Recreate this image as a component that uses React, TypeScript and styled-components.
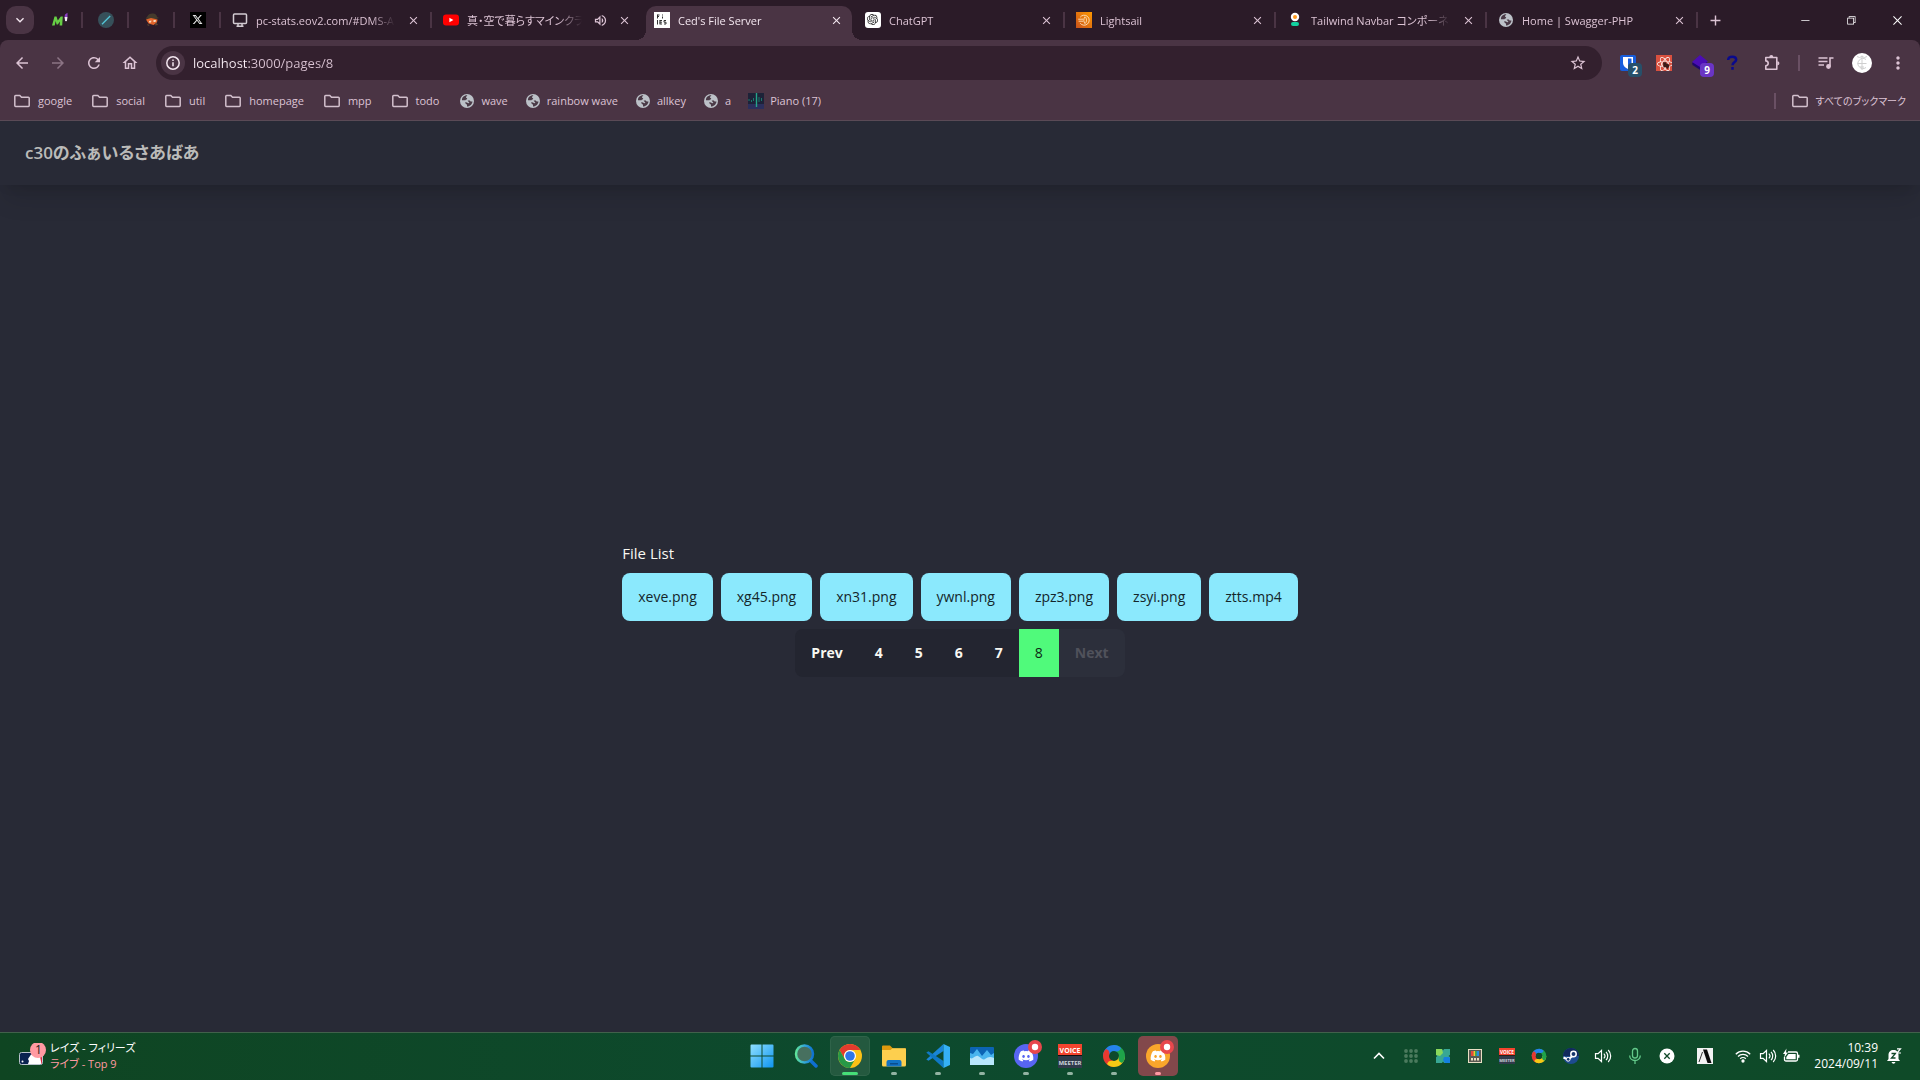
import React from 'react';
import styled, { createGlobalStyle, css } from 'styled-components';
import {
  MdArrowBack,
  MdArrowForward,
  MdRefresh,
  MdOutlineHome,
  MdStarBorder,
  MdMoreVert,
  MdClose,
  MdAdd,
  MdKeyboardArrowDown,
  MdOutlineVolumeUp,
} from 'react-icons/md';
import { FaXTwitter, FaDiscord, FaReact } from 'react-icons/fa6';
import { SiOpenai } from 'react-icons/si';
import { VscChromeRestore, VscChromeMinimize, VscChromeClose } from 'react-icons/vsc';

const color = {
  strip: '#2b1b28',
  chrome: '#4a3444',
  field: '#33202e',
  chromeText: '#dcc3d4',
  chromeLight: '#f3e6ef',
  page: '#282a36',
  pageText: '#f8f8f2',
  file: '#8be9fd',
  active: '#50fa7b',
};

const Global = createGlobalStyle`
  * { box-sizing: border-box; }
  body {
    margin: 0;
    background: ${color.page};
    font-family: "Open Sans", "Noto Sans CJK JP", sans-serif;
    font-feature-settings: "palt";
  }
  button, input { font: inherit; color: inherit; }
  button { padding: 0; border: 0; background: none; cursor: pointer; }
  a { color: inherit; text-decoration: none; }
  svg { display: block; flex: none; }
  h1 { margin: 0; }
`;

const Screen = styled.div`
  display: flex;
  flex-direction: column;
  min-height: 100vh;
`;

/* ---------- Tab strip ---------- */

const TabStrip = styled.header`
  display: flex;
  align-items: stretch;
  height: 40px;
  padding-left: 6px;
  background: ${color.strip};
  color: ${color.chromeText};
  font-size: 11px;
`;

const TabSearch = styled.button`
  display: grid;
  place-items: center;
  align-self: center;
  width: 28px;
  height: 28px;
  margin-right: 3px;
  border-radius: 10px;
  background: ${color.chrome};
  color: ${color.chromeLight};
`;

const separator = css`
  background: linear-gradient(${color.chrome}, ${color.chrome}) right center / 2px 16px no-repeat;
`;

const PinnedTab = styled.button`
  display: grid;
  place-items: center;
  width: 46px;
  ${separator}
`;

const TabItem = styled.div<{ $active?: boolean; $divided?: boolean }>`
  position: relative;
  display: flex;
  align-items: center;
  flex: 0 1 211px;
  min-width: 0;
  padding: 0 11px;
  ${(p) => p.$divided && separator}
  ${(p) =>
    p.$active &&
    css`
      flex-basis: 206px;
      height: 34px;
      margin: 6px 2px 0 3px;
      padding: 0 8px 6px;
      border-radius: 10px 10px 0 0;
      background: ${color.chrome};
      color: ${color.chromeLight};
      &::before,
      &::after {
        content: '';
        position: absolute;
        bottom: 0;
        width: 10px;
        height: 10px;
      }
      &::before {
        right: 100%;
        background: radial-gradient(circle at 0 0, transparent 10px, ${color.chrome} 10px);
      }
      &::after {
        left: 100%;
        background: radial-gradient(circle at 100% 0, transparent 10px, ${color.chrome} 10px);
      }
    `}
`;

const TabTitle = styled.a`
  flex: 1;
  min-width: 0;
  margin: 0 2px 0 8px;
  padding-top: 2px;
  overflow: hidden;
  line-height: 18px;
  white-space: nowrap;
  mask-image: linear-gradient(to left, transparent, #000 24px);
`;

const TabButton = styled.button`
  display: grid;
  place-items: center;
  width: 16px;
  height: 16px;
  margin-left: 8px;
`;

const NewTab = styled.button`
  display: grid;
  place-items: center;
  width: 34px;
`;

const WindowControls = styled.div`
  display: flex;
  margin-left: auto;
  color: #fff;
`;

const WindowButton = styled.button`
  display: grid;
  place-items: center;
  width: 46px;
`;

/* ---------- Toolbar ---------- */

const ToolbarBack = styled.div`
  background: ${color.strip};
`;

const Toolbar = styled.div`
  display: flex;
  align-items: center;
  height: 46px;
  padding: 0 4px;
  border-radius: 8px 8px 0 0;
  background: ${color.chrome};
  color: ${color.chromeText};
`;

const ToolButton = styled.button<{ $dim?: boolean }>`
  display: grid;
  place-items: center;
  width: 36px;
  height: 34px;
  opacity: ${(p) => (p.$dim ? 0.45 : 1)};
`;

const AddressBar = styled.form`
  display: flex;
  align-items: center;
  flex: 1;
  height: 34px;
  margin: 0 8px;
  padding: 0 6px 0 5px;
  border-radius: 17px;
  background: ${color.field};
`;

const SiteInfo = styled.button`
  display: grid;
  place-items: center;
  width: 24px;
  height: 24px;
  border-radius: 50%;
  background: ${color.chrome};
`;

const AddressInput = styled.input`
  flex: 1;
  min-width: 0;
  margin-left: 8px;
  padding: 0;
  border: 0;
  outline: 0;
  background: linear-gradient(90deg, #fbeff7 56px, #d9c2d2 56px);
  background-clip: text;
  color: transparent;
  caret-color: ${color.chromeLight};
  font-size: 13px;
  line-height: 20px;
`;

const Extension = styled.button`
  position: relative;
  display: grid;
  place-items: center;
  width: 36px;
  height: 34px;
`;

const ExtensionBadge = styled.span<{ $tone: string }>`
  position: absolute;
  right: 4px;
  bottom: 3px;
  width: 14px;
  height: 14px;
  border-radius: 4px;
  background: ${(p) => p.$tone};
  color: #fff;
  font-size: 10px;
  font-weight: 700;
  line-height: 14px;
  text-align: center;
`;

const ToolDivider = styled.span`
  width: 2px;
  height: 16px;
  margin: 0 8px;
  background: #6a5064;
`;

/* ---------- Bookmarks ---------- */

const Bookmarks = styled.nav`
  display: flex;
  align-items: center;
  height: 35px;
  padding: 0 14px 4px;
  border-bottom: 1px solid #5a4a56;
  background: ${color.chrome};
  color: ${color.chromeText};
  font-size: 11px;
`;

const Bookmark = styled.a<{ $site?: boolean }>`
  display: flex;
  align-items: center;
  gap: ${(p) => (p.$site ? 6 : 8)}px;
  margin-right: ${(p) => (p.$site ? 17 : 20)}px;
  line-height: 16px;
`;

const AllBookmarks = styled.a`
  display: flex;
  align-items: center;
  gap: 8px;
  margin-left: auto;
  padding-left: 16px;
  border-left: 2px solid #6a5064;
  font-size: 10px;
  line-height: 16px;
`;

/* ---------- Page ---------- */

const Navbar = styled.div`
  position: relative;
  display: flex;
  align-items: center;
  height: 64px;
  padding: 0 25px;
  background: ${color.page};
  box-shadow: 0 20px 25px -5px rgba(0, 0, 0, 0.1), 0 8px 10px -6px rgba(0, 0, 0, 0.1);
`;

const Brand = styled.a`
  color: #bbbbb9;
  font-size: 17px;
  font-weight: 600;
  line-height: 28px;
`;

const Main = styled.main`
  display: flex;
  flex: 1;
  flex-direction: column;
  align-items: center;
  justify-content: center;
  color: ${color.pageText};
`;

const FileSection = styled.section`
  display: flex;
  flex-direction: column;
  gap: 8px;
`;

const FileHeading = styled.h1`
  font-size: 15px;
  font-weight: 500;
  line-height: 24px;
`;

const FileRow = styled.div`
  display: flex;
  gap: 8px;
`;

const FileLink = styled.a`
  display: flex;
  align-items: center;
  height: 48px;
  padding: 0 16px;
  border-radius: 8px;
  background: ${color.file};
  color: #14262a;
  font-size: 14px;
  font-weight: 500;
`;

const Pagination = styled.nav`
  display: flex;
  align-self: center;
  overflow: hidden;
  border-radius: 8px;
`;

const PageButton = styled.button<{ $current?: boolean }>`
  height: 48px;
  padding: 0 16px;
  background: ${(p) => (p.$current ? color.active : '#232530')};
  color: ${(p) => (p.$current ? '#0d2914' : color.pageText)};
  font-size: 14px;
  font-weight: ${(p) => (p.$current ? 400 : 700)};
  &:disabled {
    background: #2c2f3b;
    color: #50525b;
    cursor: default;
  }
`;

/* ---------- Taskbar ---------- */

const Taskbar = styled.footer`
  display: grid;
  grid-template-columns: 1fr auto 1fr;
  align-items: center;
  height: 48px;
  box-shadow: inset 0 1px #41614b;
  background: linear-gradient(90deg, #0f4522, #0d4a2e 45%, #0f4a28);
  color: #fff;
`;

const Widget = styled.button`
  display: flex;
  align-items: center;
  justify-self: start;
  gap: 4px;
  margin-left: 18px;
  text-align: left;
`;

const WidgetText = styled.span`
  display: flex;
  flex-direction: column;
  font-size: 11px;
  line-height: 16px;
`;

const WidgetLive = styled.span`
  color: #ff9aa2;
`;

const TaskIcons = styled.div`
  display: flex;
  gap: 4px;
`;

const TaskButton = styled.button<{ $state?: 'open' | 'focused' | 'alert' }>`
  position: relative;
  display: grid;
  place-items: center;
  width: 40px;
  height: 40px;
  border-radius: 5px;
  ${(p) => p.$state === 'focused' && 'background: #24593f; box-shadow: inset 0 0 0 1px #2f6349;'}
  ${(p) => p.$state === 'alert' && 'background: #82484b;'}
  &::after {
    content: '';
    display: ${(p) => (p.$state ? 'block' : 'none')};
    position: absolute;
    bottom: 1px;
    left: 50%;
    width: ${(p) => (p.$state === 'focused' ? 16 : 6)}px;
    height: 3px;
    border-radius: 2px;
    background: ${(p) =>
      p.$state === 'focused' ? '#46e078' : p.$state === 'alert' ? '#ff9aa2' : '#93b3a2'};
    transform: translateX(-50%);
  }
`;

const Tray = styled.div`
  display: flex;
  align-items: center;
  justify-self: end;
  padding-right: 18px;
`;

const TrayButton = styled.button<{ $w?: number }>`
  display: grid;
  place-items: center;
  width: ${(p) => p.$w ?? 32}px;
  height: 40px;
`;

const Clock = styled.button`
  display: flex;
  flex-direction: column;
  align-items: flex-end;
  margin: 0 8px 0 7px;
  font-size: 12px;
  line-height: 16px;
`;

/* ---------- Drawings ---------- */

const Folder = () => (
  <svg width="16" height="16" viewBox="0 0 16 16" fill="none" stroke="#d3c0cd" strokeWidth="1.5">
    <path d="M.8 3.2c0-.5.3-.8.8-.8h4.2l1.7 1.8h6.9c.5 0 .8.3.8.8v7.6c0 .5-.3.8-.8.8H1.6c-.5 0-.8-.3-.8-.8z" />
  </svg>
);

const Globe = () => (
  <svg width="16" height="16" viewBox="0 0 16 16">
    <circle cx="8" cy="8" r="7" fill="#bcc1c8" />
    <path
      d="M8.4 2.2c-.2 1-1.400 1-1.400 2s1.200.6 1.200 1.500-1.700.6-1.700 1.600H3c-.4-2.600 1.900-5.200 5.400-5.100zM8.600 7.400h2.300l.7 1h1.900c-.3 2.500-2.300 5-5.500 5.100v-1.700L6.300 10.200V9H3.200c1.600-.2 2.800-.1 4 .2.700.2 1.600 1 2.500 1 .8 0 .8-.8.2-1z"
      fill="#4a3a47"
    />
  </svg>
);

const Monitor = () => (
  <svg width="16" height="16" viewBox="0 0 16 16" fill="none" stroke="#d3ccd2" strokeWidth="1.5">
    <rect x="1.500" y="2" width="13" height="9.500" rx="1" />
    <path d="M6 11.500v2.500M10 11.500v2.500M4.500 14.200h7" />
  </svg>
);

const YouTube = () => (
  <svg width="16" height="16" viewBox="0 0 16 16">
    <rect y="2.500" width="16" height="11" rx="3" fill="#f00" />
    <path d="M6.400 5.700v4.600L10.400 8z" fill="#fff" />
  </svg>
);

const MonkeyM = () => (
  <svg width="18" height="16" viewBox="0 0 18 16">
    <path d="M1 13.500 3.500 4.500h2l1.300 4 3-4h2l-.6 9H8.600l.4-4-2.200 3H5.600L4.700 9l-1 4.500z" fill="#67cf45" />
    <path d="M13.500 5h3l-.5 3.500-1 1-1-1z" fill="#f2e9f5" />
    <path d="M14 2.500 16.500.8V5h-3z" fill="#8a3fc4" />
  </svg>
);

const Slash = () => (
  <svg width="16" height="16" viewBox="0 0 16 16">
    <circle cx="8" cy="8" r="8" fill="#36505a" />
    <path d="M4 12.200 12.200 4" stroke="#54c7d8" strokeWidth="1.300" />
  </svg>
);

const Pilot = () => (
  <svg width="16" height="16" viewBox="0 0 16 16">
    <path d="M3 5c1-3 4-4 6.500-3.500 2.500.5 3.500 2 3.500 3.500l2 1-3 1H4L1.500 6.500z" fill="#443a2c" />
    <path d="M2 7.500 7 6l6.500 1.500-.5 3-3.500 2.500-5-1.500z" fill="#e2652c" />
    <path d="M5 9l2.500-.5L7 10.500H5zM9.500 8H12l-.5 2H9.500z" fill="#f7d9bd" />
    <path d="M12 10l2 3-3 .5zM3 12l3 1-2 1z" fill="#5b4633" />
  </svg>
);

const XLogo = () => (
  <svg width="16" height="16" viewBox="0 0 16 16">
    <rect width="16" height="16" fill="#000" />
    <FaXTwitter x="2" y="2" width="12" height="12" color="#e8e8e8" />
  </svg>
);

const FilesFavicon = () => (
  <svg width="16" height="16" viewBox="0 0 16 16">
    <rect width="16" height="16" fill="#fff" />
    <path
      d="M3.500 2.500v4M3.500 3h2M3.500 4.500h1.500M8.500 2.500v1M8.500 4.500v2M3.500 8v4.500M5.500 8.500H8M5.500 10.200H8M5.500 12H8M6 8.500V12M12 8.500h-2v1.700h2V12h-2"
      fill="none"
      stroke="#333"
      strokeWidth="1"
    />
  </svg>
);

const ChatFavicon = () => (
  <svg width="16" height="16" viewBox="0 0 16 16">
    <rect width="16" height="16" rx="3" fill="#fff" />
    <SiOpenai x="2" y="2" width="12" height="12" color="#222" />
  </svg>
);

const Lightsail = () => (
  <svg width="16" height="16" viewBox="0 0 16 16" fill="none">
    <defs>
      <linearGradient id="sail" x1="0" y1="1" x2="1" y2="0">
        <stop stopColor="#c8511b" />
        <stop offset="1" stopColor="#f90" />
      </linearGradient>
    </defs>
    <rect width="16" height="16" fill="url(#sail)" />
    <path d="M4.200 5.200a5 5 0 1 1 0 6M2.200 7.200h5M2.600 9.200h4.600M9 4.800c2 1.500 2 5.200 0 6.800-1.600-2-1.600-4.600 0-6.800z" stroke="#ffe3c2" strokeWidth=".9" />
  </svg>
);

const Bulb = () => (
  <svg width="16" height="16" viewBox="0 0 16 16">
    <circle cx="8" cy="5" r="4.200" fill="#fff" />
    <circle cx="8" cy="5" r="2" fill="#ff9b1f" />
    <rect x="4" y="10" width="8" height="4" rx="2" fill="#12d2a0" />
  </svg>
);

const Piano = () => (
  <svg width="16" height="16" viewBox="0 0 16 16">
    <rect width="16" height="16" fill="#1d2238" />
    <path d="M0 11h16v5H0z" fill="#2b2f5c" />
    <path d="M8.500 0v14" stroke="#25a58a" strokeWidth="1.400" />
    <path d="M11 4v5M5.500 5v3M1 6v2M3.500 7v2M13.500 5v3" stroke="#197a6c" />
  </svg>
);

const InfoIcon = () => (
  <svg width="16" height="16" viewBox="0 0 16 16" fill="none" stroke="#f3e6ef" strokeWidth="1.500">
    <circle cx="8" cy="8" r="6.200" />
    <path d="M8 7.200v4M8 4.500v1.500" />
  </svg>
);

const Shield = () => (
  <svg width="16" height="16" viewBox="0 0 16 16">
    <rect width="16" height="16" rx="2" fill="#175ddc" />
    <path d="M3 2h10v6c0 3-2.500 4.800-5 6-2.500-1.200-5-3-5-6z" fill="#fff" />
    <path d="M8 3.500h3.500V8c0 2-1.600 3.300-3.500 4.200z" fill="#175ddc" />
  </svg>
);

const ReactTool = () => (
  <svg width="16" height="16" viewBox="0 0 16 16">
    <rect width="16" height="16" fill="#d9503f" />
    <FaReact x="1" y="1" width="14" height="14" color="#fff" />
    <path d="M7 7.500l2.500-.5 1 1.500 2 .5 1 2-2 3-2-2-2 .5z" fill="#3c1a16" />
  </svg>
);

const Layers = () => (
  <svg width="18" height="18" viewBox="0 0 18 18">
    <path d="M1 8.500 1.500 11 10 16.500l6-4V8z" fill="#1f0670" />
    <path d="M9 1l8 6.500L9 13 1 8z" fill="#4b0db5" />
  </svg>
);

const Question = () => (
  <svg width="18" height="16" viewBox="0 0 18 16" fill="none" stroke="#0a0a8c" strokeWidth="2.500">
    <path d="M1.200 5C1.200 2.800 2.800 1.700 5.200 1.700S9.200 2.900 9.200 4.700C9.200 7 5.500 7 5.500 10.200M5.500 12v2.800" />
  </svg>
);

const Puzzle = () => (
  <svg width="18" height="18" viewBox="0 0 18 18">
    <path
      d="M2.800 3.500h11v11.700h-11v-3.400c3.200-.2 3.200-4.700 0-4.900z"
      fill="none"
      stroke="#dcc3d4"
      strokeWidth="1.600"
      strokeLinejoin="round"
    />
    <path d="M6.300 3a2 2 0 0 1 4 0zM14.300 7.200a2 2 0 0 1 0 4.200z" fill="#dcc3d4" />
  </svg>
);

const Playlist = () => (
  <svg width="18" height="18" viewBox="0 0 18 18" fill="none" stroke="#dcc3d4" strokeWidth="1.600">
    <path d="M1.500 4h9M1.500 7.500h9M1.500 11h5.500M13 12.500V4h3.500" />
    <circle cx="11.500" cy="12.500" r="1.600" fill="#dcc3d4" />
  </svg>
);

const Avatar = () => (
  <svg width="20" height="20" viewBox="0 0 20 20" fill="none" stroke="#cfcfcf">
    <circle cx="10" cy="10" r="10" fill="#fff" stroke="none" />
    <path d="M14 6.500A5 5 0 1 0 14 14.500M10 2.500v14.500M5.500 10.500h9M5 3.500q2.500 2 5 0q2.500 2 5 0M8 14h4" />
  </svg>
);

const LeagueBadge = () => (
  <svg width="28" height="26" viewBox="0 0 28 26">
    <rect x="1.500" y="9.500" width="23" height="12" rx="2" fill="#0a2350" stroke="#b9c3cc" />
    <path d="M17 10h7v11h-9z" fill="#d7263d" />
    <path d="M13 11.500l5-1 4 3 1.500 7.500H10l1-3-1-2z" fill="#fff" />
    <circle cx="4.500" cy="18.500" r="1" fill="#fff" />
    <circle cx="20" cy="8" r="8" fill="#ff9aa2" transform="translate(0 -1)" />
    <text x="20.500" y="11" fontSize="12" textAnchor="middle" fill="#1a1a1a">1</text>
  </svg>
);

const Windows = () => (
  <svg width="24" height="24" viewBox="0 0 24 24">
    <defs>
      <linearGradient id="win" x1="0" y1="0" x2="1" y2="1">
        <stop stopColor="#8fe0ff" />
        <stop offset="1" stopColor="#0f95f0" />
      </linearGradient>
    </defs>
    <path d="M1.500.5h10v11h-11v-10q0-1 1-1zM12.500.5h10q1 0 1 1v10h-11zM.5 12.500h11v11h-10q-1 0-1-1zM12.500 12.500h11v10q0 1-1 1h-10z" fill="url(#win)" />
  </svg>
);

const SearchGlass = () => (
  <svg width="24" height="24" viewBox="0 0 24 24" fill="none">
    <defs>
      <linearGradient id="lens">
        <stop stopColor="#5fe39a" />
        <stop offset=".5" stopColor="#33a8d8" />
        <stop offset="1" stopColor="#0d72d4" />
      </linearGradient>
    </defs>
    <path d="M16.500 16.500 22 22" stroke="#0f6fd0" strokeWidth="3.500" strokeLinecap="round" />
    <circle cx="10.500" cy="10" r="8.500" fill="#47705f" stroke="url(#lens)" strokeWidth="2.500" />
  </svg>
);

const Chrome = () => (
  <svg width="24" height="24" viewBox="0 0 24 24">
    <circle cx="12" cy="12" r="12" fill="#fbc116" />
    <path d="M1.610 6A12 12 0 0 1 22.390 6H12a6 6 0 0 0-5.200 9z" fill="#e33b2e" />
    <path d="M1.610 6A12 12 0 0 0 12 24l5.200-9a6 6 0 0 1-10.400 0z" fill="#279847" />
    <circle cx="12" cy="12" r="6" fill="#fff" />
    <circle cx="12" cy="12" r="4.800" fill="#2f76e8" />
  </svg>
);

const Explorer = () => (
  <svg width="24" height="24" viewBox="0 0 24 24">
    <path d="M0 2.500q0-1 1-1h7l3 3H24V12H0z" fill="#dc9a0e" />
    <path d="M0 6h8.500l2-1.800H23q1 0 1 1V21q0 1.500-1.500 1.500h-21Q0 22.500 0 21z" fill="#fdcf4e" />
    <path d="M4.500 22.500V18q0-2 2-2h11q2 0 2 2v4.500z" fill="#1273c4" />
    <path d="M8 19h8v1.500H8z" fill="#0a4d8d" />
  </svg>
);

const Code = () => (
  <svg width="24" height="24" viewBox="0 0 24 24">
    <path d="M.3 15.500 17.500 0v7L2.500 16.700z" fill="#1a86d6" />
    <path d="M.3 8.500 2.500 7.300 17.500 17v7z" fill="#0f78c4" />
    <path d="M17.500 0 24 3v18l-6.500 3z" fill="#35b1f5" />
  </svg>
);

const Waves = () => (
  <svg width="24" height="20" viewBox="0 0 24 20">
    <rect y="1" width="24" height="18" rx="1" fill="#0c64b4" />
    <path d="M0 7l3 1 4-5 5 7 5-6 4 5 3-2v11H0z" fill="#49b4ee" />
    <path d="M0 12c3 2 5-3 8-2s4 5 7 3 5-3 9-1v7H0z" fill="#b9e7fc" />
  </svg>
);

const DiscordApp = ({ fill }: { fill: string }) => (
  <svg width="32" height="32" viewBox="0 0 32 32">
    <circle cx="16" cy="16" r="12" fill={fill} />
    <FaDiscord x="8" y="8" width="16" height="16" color="#fff" />
    <circle cx="25" cy="7" r="7" fill="#e8474c" />
    <circle cx="25" cy="7" r="3.200" fill="#fff" />
  </svg>
);

const VoiceMeeter = ({ size }: { size: number }) => (
  <svg width={size} height={size} viewBox="0 0 24 24">
    <rect width="24" height="11" fill="#f4442e" />
    <rect y="11" width="24" height="1" fill="#111" />
    <rect y="12" width="24" height="12" fill="#303a4a" />
    <text x="12" y="8.500" fontSize="7" fontWeight="700" textAnchor="middle" fill="#fff">VOICE</text>
    <text x="12" y="20.500" fontSize="6" fontWeight="700" textAnchor="middle" fill="#ccd2da">MEETER</text>
  </svg>
);

const Swirl = ({ size }: { size: number }) => (
  <svg width={size} height={size} viewBox="0 0 24 24" fill="none" strokeWidth="6">
    <path d="M12 4a8 8 0 0 1 8 8" stroke="#1fa34a" />
    <path d="M20 12a8 8 0 0 1-8 8" stroke="#f6c915" />
    <path d="M12 20a8 8 0 0 1-8-8" stroke="#e8392f" />
    <path d="M4 12a8 8 0 0 1 8-8" stroke="#2583ec" />
    <path d="M1 12c0-3 1-5 3-7 3 1 4 3 3 7z" fill="#e8392f" />
    <path d="M12 1c3 0 5 1 7 3-1 3-3 4-7 3z" fill="#2583ec" />
    <path d="M23 12c0 3-1 5-3 7-3-1-4-3-3-7z" fill="#1fa34a" />
    <path d="M12 23c-3 0-5-1-7-3 1-3 3-4 7-3z" fill="#f6c915" />
  </svg>
);

const Chevron = () => (
  <svg width="12" height="12" viewBox="0 0 12 12" fill="none" stroke="#fff" strokeWidth="1.600">
    <path d="M1 8.500l5-5 5 5" />
  </svg>
);

const DotGrid = () => (
  <svg width="14" height="14" viewBox="0 0 14 14" fill="#4b7a5d">
    {[2, 7, 12].map((y) => [2, 7, 12].map((x) => <circle key={`${x}-${y}`} cx={x} cy={y} r="1.900" />))}
  </svg>
);

const Pinwheel = () => (
  <svg width="16" height="16" viewBox="0 0 16 16">
    <path d="M1 1h6l1 1.500L9 1h6v6l-1.500 1L15 9v6H9l-1-1.500L7 15H1V9l1.500-1L1 7z" fill="#38a794" />
    <path d="M1 1h6l1 4-3 3-4-1z" fill="#8bd95b" />
    <path d="M9 9h5l1 1v5h-5l-2-3z" fill="#1580e0" />
  </svg>
);

const PowerToys = () => (
  <svg width="14" height="14" viewBox="0 0 14 14">
    <rect x=".5" y=".5" width="13" height="13" fill="#5a5a52" stroke="#e9dfc4" />
    <path d="M3 2h2.500v5H3z" fill="#e8453c" />
    <path d="M5.500 2h1.500v5H5.500z" fill="#f6c42f" />
    <path d="M7 2h1.700v5H7z" fill="#3fae49" />
    <path d="M8.700 2H11v5H8.700z" fill="#2a8de0" />
    <path d="M3 9h2v2.500H3zM6 9h2v2.500H6zM9 9h2v2.500H9z" fill="#e9dfc4" />
  </svg>
);

const SteamApp = () => (
  <svg width="16" height="16" viewBox="0 0 16 16" fill="none">
    <circle cx="8" cy="8" r="8" fill="#1d4b8f" />
    <path d="M0 8a8 8 0 0 1 16 0z" fill="#122a5c" />
    <path d="M.5 9.500 5 11.500 9.500 8" stroke="#fff" strokeWidth="2.200" />
    <circle cx="5.200" cy="11.300" r="1.900" fill="#15356b" stroke="#fff" strokeWidth="1" />
    <circle cx="10.500" cy="6" r="2.700" fill="#15356b" stroke="#fff" strokeWidth="1.500" />
  </svg>
);

const Speaker = () => (
  <svg width="18" height="16" viewBox="0 0 18 16" fill="none" stroke="#fff" strokeWidth="1.200">
    <path d="M1.500 5.700h2.600L7.500 2.500v11L4.100 10.300H1.500z" />
    <path d="M9.800 5.600a3.400 3.400 0 0 1 0 4.800M12 3.800a6 6 0 0 1 0 8.400M14.200 2a8.500 8.500 0 0 1 0 12" />
  </svg>
);

const Mic = () => (
  <svg width="14" height="18" viewBox="0 0 14 18" fill="none" stroke="#63c98a" strokeWidth="1.300">
    <rect x="4.500" y="1.500" width="5" height="9.500" rx="2.500" />
    <path d="M1.700 8.500c0 3 2.300 5 5.300 5s5.300-2 5.300-5M7 13.500V17" />
  </svg>
);

const CrossDisc = () => (
  <svg width="16" height="16" viewBox="0 0 16 16">
    <circle cx="8" cy="8" r="7.500" fill="#fff" />
    <path d="M5.300 5.300l5.400 5.400M10.700 5.300l-5.400 5.400" stroke="#0f4727" strokeWidth="1.300" />
  </svg>
);

const ImeMark = () => (
  <svg width="16" height="16" viewBox="0 0 16 16">
    <rect width="16" height="16" fill="#f3f3f3" />
    <path d="M6 1.500h4L14.500 15h-4z" fill="#0a0a0a" />
    <path d="M5.500 4 2 14" stroke="#333" />
  </svg>
);

const Wifi = () => (
  <svg width="16" height="14" viewBox="0 0 16 14" fill="none" stroke="#fff" strokeWidth="1.300">
    <path d="M.8 5.200a10.200 10.200 0 0 1 14.400 0M3 7.500a7 7 0 0 1 10 0M5.200 9.700a4 4 0 0 1 5.600 0" />
    <circle cx="8" cy="12" r="1" fill="#fff" />
  </svg>
);

const Battery = () => (
  <svg width="18" height="16" viewBox="0 0 18 16">
    <path d="M6 4h8q1.500 0 1.500 1.500v6Q15.500 13 14 13H4q-1.500 0-1.500-1.500V9" fill="none" stroke="#fff" strokeWidth="1.300" />
    <path d="M6.500 6h7.200v5.200H4.300V9z" fill="#fff" />
    <path d="M16 6.800h1.500v3H16zM4.500.5 1 6h2L2 10l4-5.500H4z" fill="#fff" />
  </svg>
);

const Bell = () => (
  <svg width="16" height="16" viewBox="0 0 16 16">
    <path d="M2.500 11V7C2.500 4 4.500 2 7.500 2s5 2 5 5v4l1.500 2H1zM5.500 14h4q-.5 1.800-2 1.800T5.500 14z" fill="#fff" />
    <path d="M5.500 5.500h4L5.500 10h4" fill="none" stroke="#0f4727" strokeWidth="1.300" />
    <path d="M11 .8h3.500L11 5h4" fill="none" stroke="#fff" strokeWidth="1.200" />
  </svg>
);

/* ---------- Content ---------- */

const pinned = [
  { name: 'M', icon: <MonkeyM /> },
  { name: 'Slash', icon: <Slash /> },
  { name: 'Pilot', icon: <Pilot /> },
  { name: 'X', icon: <XLogo /> },
];

const tabs = [
  { title: 'pc-stats.eov2.com/#DMS-A', icon: <Monitor />, divided: true },
  { title: '真・空で暮らすマインクラフ', icon: <YouTube />, audio: true },
  { title: "Ced's File Server", icon: <FilesFavicon />, active: true },
  { title: 'ChatGPT', icon: <ChatFavicon />, divided: true },
  { title: 'Lightsail', icon: <Lightsail />, divided: true },
  { title: 'Tailwind Navbar コンポーネン', icon: <Bulb />, divided: true },
  { title: 'Home | Swagger-PHP', icon: <Globe />, divided: true },
];

const folders = ['google', 'social', 'util', 'homepage', 'mpp', 'todo'];
const sites = ['wave', 'rainbow wave', 'allkey', 'a'];
const files = ['xeve.png', 'xg45.png', 'xn31.png', 'ywnl.png', 'zpz3.png', 'zsyi.png', 'ztts.mp4'];
const pages = [4, 5, 6, 7, 8];

type TaskApp = { name: string; icon: React.ReactNode; state?: 'open' | 'focused' | 'alert' };
const apps: TaskApp[] = [
  { name: 'Start', icon: <Windows /> },
  { name: 'Search', icon: <SearchGlass /> },
  { name: 'Chrome', icon: <Chrome />, state: 'focused' },
  { name: 'Explorer', icon: <Explorer />, state: 'open' },
  { name: 'Code', icon: <Code />, state: 'open' },
  { name: 'Monitor', icon: <Waves />, state: 'open' },
  { name: 'Discord', icon: <DiscordApp fill="#5865f2" />, state: 'open' },
  { name: 'Voicemeeter', icon: <VoiceMeeter size={24} />, state: 'open' },
  { name: 'Swirl', icon: <Swirl size={24} />, state: 'open' },
  { name: 'Discord Canary', icon: <DiscordApp fill="#f9a62b" />, state: 'alert' },
];

const tray = [
  { name: 'Show hidden icons', icon: <Chevron /> },
  { name: 'Grid', icon: <DotGrid /> },
  { name: 'Pinwheel', icon: <Pinwheel /> },
  { name: 'PowerToys', icon: <PowerToys /> },
  { name: 'Voicemeeter', icon: <VoiceMeeter size={16} /> },
  { name: 'Swirl', icon: <Swirl size={16} /> },
  { name: 'Steam', icon: <SteamApp /> },
  { name: 'Audio', icon: <Speaker /> },
  { name: 'Microphone', icon: <Mic /> },
  { name: 'Dismiss', icon: <CrossDisc /> },
];

export default function App() {
  return (
    <Screen>
      <Global />
      <TabStrip>
        <TabSearch aria-label="Search tabs">
          <MdKeyboardArrowDown size={16} />
        </TabSearch>
        {pinned.map((tab) => (
          <PinnedTab key={tab.name} aria-label={tab.name}>
            {tab.icon}
          </PinnedTab>
        ))}
        {tabs.map((tab) => (
          <TabItem key={tab.title} $active={tab.active} $divided={tab.divided}>
            {tab.icon}
            <TabTitle href="#">{tab.title}</TabTitle>
            {tab.audio && (
              <TabButton aria-label="Mute tab">
                <MdOutlineVolumeUp size={15} />
              </TabButton>
            )}
            <TabButton aria-label="Close tab">
              <MdClose size={13} />
            </TabButton>
          </TabItem>
        ))}
        <NewTab aria-label="New tab">
          <MdAdd size={17} />
        </NewTab>
        <WindowControls>
          <WindowButton aria-label="Minimize">
            <VscChromeMinimize size={12} />
          </WindowButton>
          <WindowButton aria-label="Restore">
            <VscChromeRestore size={12} />
          </WindowButton>
          <WindowButton aria-label="Close">
            <VscChromeClose size={13} />
          </WindowButton>
        </WindowControls>
      </TabStrip>

      <ToolbarBack>
        <Toolbar>
          <ToolButton aria-label="Back">
            <MdArrowBack size={18} />
          </ToolButton>
          <ToolButton aria-label="Forward" $dim>
            <MdArrowForward size={18} />
          </ToolButton>
          <ToolButton aria-label="Reload">
            <MdRefresh size={18} />
          </ToolButton>
          <ToolButton aria-label="Home">
            <MdOutlineHome size={18} />
          </ToolButton>
          <AddressBar>
            <SiteInfo type="button" aria-label="Site information">
              <InfoIcon />
            </SiteInfo>
            <AddressInput aria-label="Address" defaultValue="localhost:3000/pages/8" />
            <ToolButton type="button" aria-label="Bookmark this page">
              <MdStarBorder size={18} />
            </ToolButton>
          </AddressBar>
          <Extension aria-label="Passwords">
            <Shield />
            <ExtensionBadge $tone="#27506a">2</ExtensionBadge>
          </Extension>
          <Extension aria-label="React tools">
            <ReactTool />
          </Extension>
          <Extension aria-label="Layers">
            <Layers />
            <ExtensionBadge $tone="#6a35c4">9</ExtensionBadge>
          </Extension>
          <Extension aria-label="Help">
            <Question />
          </Extension>
          <Extension aria-label="Extensions">
            <Puzzle />
          </Extension>
          <ToolDivider />
          <ToolButton aria-label="Media">
            <Playlist />
          </ToolButton>
          <ToolButton aria-label="Profile">
            <Avatar />
          </ToolButton>
          <ToolButton aria-label="Menu">
            <MdMoreVert size={20} />
          </ToolButton>
        </Toolbar>
      </ToolbarBack>

      <Bookmarks>
        {folders.map((name) => (
          <Bookmark key={name} href="#">
            <Folder />
            {name}
          </Bookmark>
        ))}
        {sites.map((name) => (
          <Bookmark key={name} href="#" $site>
            <Globe />
            {name}
          </Bookmark>
        ))}
        <Bookmark href="#" $site>
          <Piano />
          Piano (17)
        </Bookmark>
        <AllBookmarks href="#">
          <Folder />
          すべてのブックマーク
        </AllBookmarks>
      </Bookmarks>

      <Navbar>
        <Brand href="#">c30のふぁいるさあばあ</Brand>
      </Navbar>

      <Main>
        <FileSection>
          <FileHeading>File List</FileHeading>
          <FileRow>
            {files.map((file) => (
              <FileLink key={file} href="#">
                {file}
              </FileLink>
            ))}
          </FileRow>
          <Pagination aria-label="Pages">
            <PageButton>Prev</PageButton>
            {pages.map((page) => (
              <PageButton key={page} $current={page === 8}>
                {page}
              </PageButton>
            ))}
            <PageButton disabled>Next</PageButton>
          </Pagination>
        </FileSection>
      </Main>

      <Taskbar>
        <Widget>
          <LeagueBadge />
          <WidgetText>
            <span>レイズ - フィリーズ</span>
            <WidgetLive>ライブ - Top 9</WidgetLive>
          </WidgetText>
        </Widget>
        <TaskIcons>
          {apps.map((app) => (
            <TaskButton key={app.name} aria-label={app.name} $state={app.state}>
              {app.icon}
            </TaskButton>
          ))}
        </TaskIcons>
        <Tray>
          {tray.map((item) => (
            <TrayButton key={item.name} aria-label={item.name}>
              {item.icon}
            </TrayButton>
          ))}
          <TrayButton aria-label="Input method" $w={44}>
            <ImeMark />
          </TrayButton>
          <TrayButton aria-label="Wi-Fi">
            <Wifi />
          </TrayButton>
          <TrayButton aria-label="Volume" $w={16}>
            <Speaker />
          </TrayButton>
          <TrayButton aria-label="Battery">
            <Battery />
          </TrayButton>
          <Clock>
            <span>10:39</span>
            <span>2024/09/11</span>
          </Clock>
          <TrayButton aria-label="Notifications" $w={16}>
            <Bell />
          </TrayButton>
        </Tray>
      </Taskbar>
    </Screen>
  );
}
